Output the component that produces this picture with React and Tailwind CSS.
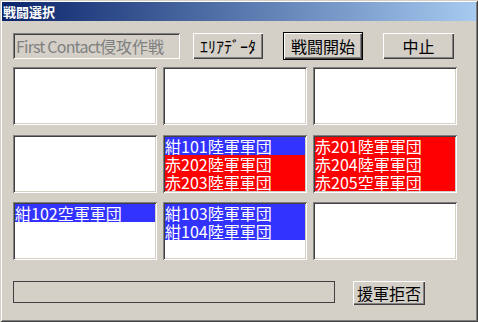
import React from "react";

const font = { fontFamily: '"Noto Sans CJK JP", "Liberation Sans", sans-serif' };

function ListBox({ items }) {
  return (
    <div className="h-[58px] w-[144px] bg-white shadow-[inset_1px_1px_#808080,inset_-1px_-1px_#ffffff,inset_2px_2px_#404040,inset_-2px_-2px_#d4d0c8] p-[2px]">
      {items.map((it, i) => (
        <div
          key={i}
          className={
            "h-[18px] flex items-center text-[16px] leading-[16px] text-white whitespace-nowrap " +
            (it.c === "b" ? "bg-[#3333ff]" : "bg-[#ff0000]")
          }
        >
          {it.t}
        </div>
      ))}
    </div>
  );
}

function Btn({ children, w, def }) {
  const inner = (
    <div className="h-full flex items-center justify-center text-[16px] leading-none text-black bg-[#d4d0c8] whitespace-nowrap shadow-[inset_1px_1px_#ffffff,inset_-1px_-1px_#404040,inset_-2px_-2px_#808080]">
      {children}
    </div>
  );
  return (
    <div className={"h-full " + w + (def ? " border border-black" : "")}>{inner}</div>
  );
}

export default function App() {
  const rows = [
    [[], [], []],
    [
      [],
      [
        { c: "b", t: "紺101陸軍軍団" },
        { c: "r", t: "赤202陸軍軍団" },
        { c: "r", t: "赤203陸軍軍団" },
      ],
      [
        { c: "r", t: "赤201陸軍軍団" },
        { c: "r", t: "赤204陸軍軍団" },
        { c: "r", t: "赤205空軍軍団" },
      ],
    ],
    [
      [{ c: "b", t: "紺102空軍軍団" }],
      [
        { c: "b", t: "紺103陸軍軍団" },
        { c: "b", t: "紺104陸軍軍団" },
      ],
      [],
    ],
  ];
  return (
    <div
      style={font}
      className="w-[478px] h-[322px] bg-[#d4d0c8] flex flex-col shadow-[inset_1px_1px_#d4d0c8,inset_-1px_-1px_#404040,inset_2px_2px_#ffffff,inset_-2px_-2px_#808080] overflow-hidden"
    >
      <div className="mx-[2px] mt-[2px] h-[19px] bg-[linear-gradient(to_right,#0a246a,#a6caf0)] flex items-center pl-[1px]">
        <span className="text-white font-bold text-[13px] leading-none">戦闘選択</span>
      </div>
      <div className="pl-[13px] pt-[12px] flex flex-col">
        <div className="flex h-[26px] items-stretch">
          <div className="w-[167px] h-[26px] flex items-center pl-[3px] text-[16px] leading-none text-[#808080] whitespace-nowrap shadow-[inset_1px_1px_#808080,inset_-1px_-1px_#ffffff,inset_2px_2px_#404040,inset_-2px_-2px_#d4d0c8]">
            <span className="tracking-[-0.8px]">First Contact</span>
            <span>侵攻作戦</span>
          </div>
          <div className="ml-[13px] h-[26px]">
            <Btn w="w-[70px]">ｴﾘｱﾃﾞｰﾀ</Btn>
          </div>
          <div className="ml-[20px] h-[28px] -mt-[1px]">
            <Btn w="w-[80px]" def>
              戦闘開始
            </Btn>
          </div>
          <div className="ml-[20px] h-[26px]">
            <Btn w="w-[71px]">中止</Btn>
          </div>
        </div>
        <div className="flex flex-col mt-[8px]">
          {rows.map((r, ri) => (
            <div
              key={ri}
              className={
                "flex gap-[6px] " + (ri === 1 ? "mt-[10px]" : ri === 2 ? "mt-[9px]" : "")
              }
            >
              {r.map((items, ci) => (
                <ListBox key={ci} items={items} />
              ))}
            </div>
          ))}
        </div>
        <div className="flex mt-[21px] items-start">
          <div className="w-[322px] h-[22px] border border-[#404040]" />
          <div className="ml-[18px] h-[24px]">
            <Btn w="w-[72px]">援軍拒否</Btn>
          </div>
        </div>
      </div>
    </div>
  );
}
